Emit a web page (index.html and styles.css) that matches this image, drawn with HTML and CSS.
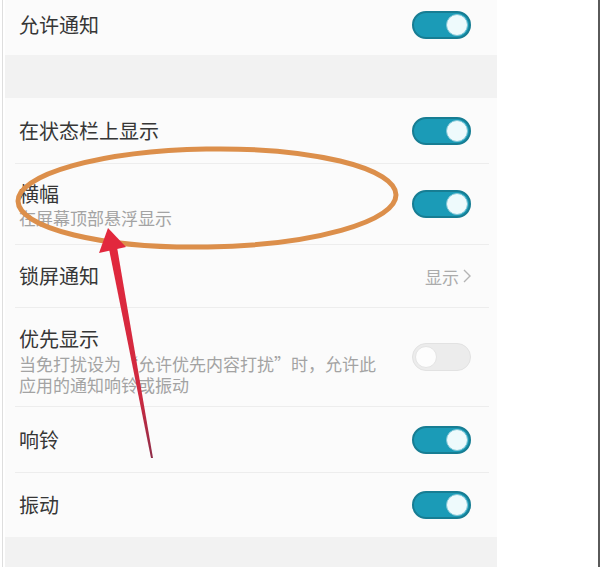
FILE: index.html
```html
<!DOCTYPE html>
<html lang="zh-CN">
<head>
  <meta charset="UTF-8" />
  <meta name="viewport" content="width=device-width, initial-scale=1.0"/>
  <title>通知管理</title>
  <link rel="stylesheet" href="styles.css">
</head>
<body>
  <div class="frame">
    <div class="screen">
      <!-- 允许通知 -->
      <div class="row row-top">
        <span class="title">允许通知</span>
        <span class="switch on"></span>
      </div>

      <div class="gap"></div>

      <div class="row row-status">
        <span class="title">在状态栏上显示</span>
        <span class="switch on"></span>
      </div>

      <div class="row row-banner">
        <div class="text">
          <div class="title">横幅</div>
          <div class="sub">在屏幕顶部悬浮显示</div>
        </div>
        <span class="switch on"></span>
      </div>

      <div class="row row-lock">
        <span class="title">锁屏通知</span>
        <span class="value">显示
          <svg class="chevron" width="8" height="14" viewBox="0 0 8 14"><path d="M1 1l6 6-6 6" fill="none" stroke="#b4b4b4" stroke-width="1.4"/></svg>
        </span>
      </div>

      <div class="row row-priority">
        <div class="text text-shift">
          <div class="title">优先显示</div>
          <div class="sub">当免打扰设为“允许优先内容打扰”时，允许此<br>应用的通知响铃或振动</div>
        </div>
        <span class="switch"></span>
      </div>

      <div class="row row-ring">
        <span class="title">响铃</span>
        <span class="switch on"></span>
      </div>

      <div class="row row-vibrate">
        <span class="title">振动</span>
        <span class="switch on"></span>
      </div>

      <div class="gap gap-bottom"></div>
    </div>

    <!-- 手画的标注：圈和箭头 -->
    <svg class="marks" width="600" height="567" viewBox="0 0 600 567">
      <defs>
        <linearGradient id="arrowFill" x1="0" y1="0" x2="0" y2="1">
          <stop offset="0" stop-color="#e2283d"/>
          <stop offset="0.7" stop-color="#cf2a40"/>
          <stop offset="1" stop-color="#8e2c48"/>
        </linearGradient>
      </defs>
      <ellipse cx="207" cy="198" rx="189" ry="49" transform="rotate(-1 207 198)" fill="none" stroke="#dc8f4b" stroke-width="5"/>
      <polygon points="117,247 109,249 151,458 153,458" fill="url(#arrowFill)"/>
      <polygon points="108,228 126,247 99,253" fill="#e2283d"/>
    </svg>
  </div>
</body>
</html>
```

FILE: styles.css
```css
:root {
  --teal: #1b9bb7;
  --teal-dark: #177d93;
  --text: #363636;
  --muted: #a3a3a3;
  --line: #ededed;
  --band: #f2f2f2;
}

body {
  margin: 0;
  background: #fff;
  font-family: "Noto Sans CJK SC", "Noto Sans", sans-serif;
  color: var(--text);
}

.frame {
  position: relative;
  width: 600px;
  height: 567px;
  box-sizing: border-box;
  padding-left: 5px;
  border-right: 2px solid #5a5a5a;
  background: linear-gradient(to right, #fff 2px, #dedede 2px, #dedede 3px, #fff 3px);
  overflow: hidden;
}

.screen {
  width: 492px;
  height: 567px;
  background: #fbfbfb;
}

.row {
  display: flex;
  align-items: center;
  justify-content: space-between;
  box-sizing: border-box;
  margin: 0 8px 0 10px;
  padding: 0 18px 0 4px;
  border-bottom: 1px solid var(--line);
}

.row-top { height: 55px; padding-bottom: 6px; border-bottom: none; }
.row-status { height: 66px; }
.row-banner { height: 81px; }
.row-lock { height: 63px; }
.row-priority { height: 99px; }
.row-ring { height: 66px; }
.row-vibrate { height: 64px; border-bottom: none; }

.gap {
  height: 43px;
  background: var(--band);
}

.gap-bottom {
  height: 30px;
}

.title {
  font-size: 20px;
  line-height: 26px;
  color: var(--text);
}

.sub {
  font-size: 17px;
  line-height: 21px;
  color: var(--muted);
}

.text-shift {
  margin-top: 8px;
}

.text-shift .title {
  line-height: 24px;
  margin-bottom: 2px;
}

.value {
  display: flex;
  align-items: center;
  gap: 4px;
  font-size: 17px;
  color: #ababab;
}

.switch {
  position: relative;
  flex: none;
  width: 59px;
  height: 28px;
  box-sizing: border-box;
  border-radius: 14px;
  background: #ececec;
  border: 1px solid #e2e2e2;
}

.switch::after {
  content: "";
  position: absolute;
  top: 2px;
  left: 2px;
  width: 22px;
  height: 22px;
  box-sizing: border-box;
  border-radius: 50%;
  background: #fdfdfd;
  border: 1px solid #e4e4e4;
}

.switch.on {
  background: var(--teal);
  border: 2px solid var(--teal-dark);
}

.switch.on::after {
  top: 1px;
  left: auto;
  right: 1px;
  background: #eefafc;
  border: 1px solid #7fc6d6;
}

.marks {
  position: absolute;
  top: 0;
  left: 0;
  pointer-events: none;
}
```
